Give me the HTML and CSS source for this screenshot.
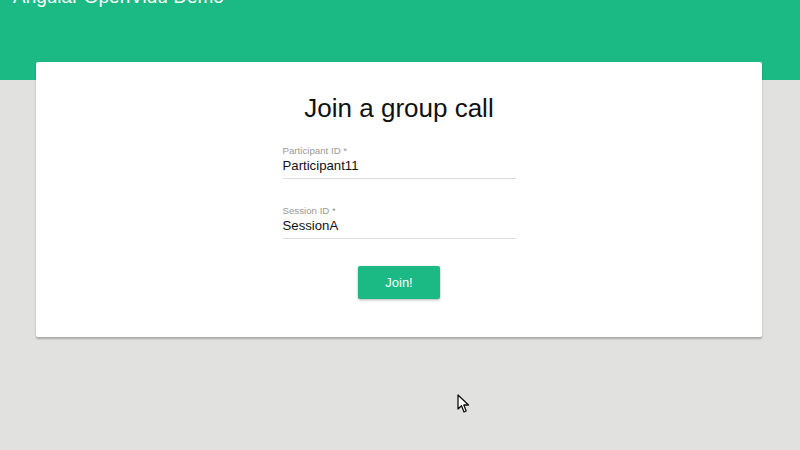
FILE: index.html
```html
<!DOCTYPE html>
<html lang="en">
<head>
  <meta charset="UTF-8">
  <meta name="viewport" content="width=device-width, initial-scale=1.0">
  <title>Angular OpenVidu Demo</title>
  <link rel="stylesheet" href="styles.css">
</head>
<body>

  <header class="topo">
    <h1>Angular OpenVidu Demo</h1>
  </header>

  <main class="cartao">
    <h2>Join a group call</h2>
    <form class="formulario">
      <div class="campo">
        <label>Participant ID *</label>
        <div class="valor">Participant11</div>
      </div>
      <div class="campo">
        <label>Session ID *</label>
        <div class="valor">SessionA</div>
      </div>
      <button type="button" class="entrar">Join!</button>
    </form>
  </main>

  <!-- cursor do mouse sobre a página -->
  <svg class="cursor" width="14" height="20" viewBox="0 0 14 20">
    <path d="M1 1 L1 15 L4.5 11.8 L7 18 L9.2 17 L6.8 11 L11.5 11 Z" fill="#fff" stroke="#111" stroke-width="1.3" stroke-linejoin="round"/>
  </svg>

</body>
</html>
```

FILE: styles.css
```css
:root {
  --verde: #1bba84;
  --fundo: #e1e1df;
}
body {
  margin: 0;
  padding: 0;
  background-color: var(--fundo);
  font-family: "Liberation Sans", Arial, sans-serif;
  height: 450px;
  overflow: hidden;
  position: relative;
}
.topo {
  background-color: var(--verde);
  height: 80px;
  overflow: hidden;
}
.topo h1 {
  margin: -14px 0 0 13px;
  font-size: 19px;
  font-weight: normal;
  line-height: 22px;
  color: #fff;
}
.cartao {
  background-color: #fff;
  margin: -18px 38px 0 36px;
  height: 275px;
  box-sizing: border-box;
  padding-top: 31px;
  box-shadow: 0 2px 2px rgba(0, 0, 0, 0.25);
  border-radius: 2px;
}
.cartao h2 {
  margin: 0;
  text-align: center;
  font-size: 26px;
  font-weight: normal;
  line-height: 30px;
  color: #111;
}
.formulario {
  width: 233px;
  margin: 22px auto 0;
  display: flex;
  flex-direction: column;
}
.campo {
  border-bottom: 1px solid #dcdcdc;
  padding-bottom: 3px;
  margin-bottom: 26px;
}
.campo label {
  display: block;
  font-size: 9.7px;
  line-height: 12px;
  color: #999;
}
.campo .valor {
  font-size: 13.2px;
  line-height: 18px;
  color: #111;
}
.entrar {
  align-self: center;
  width: 82px;
  height: 33px;
  margin-top: 1px;
  background-color: var(--verde);
  color: #fff;
  border: none;
  border-radius: 2px;
  font-family: inherit;
  font-size: 13px;
  box-shadow: 0 1px 3px rgba(0, 0, 0, 0.3);
  cursor: pointer;
}
.cursor {
  position: absolute;
  left: 457px;
  top: 394px;
}
```
